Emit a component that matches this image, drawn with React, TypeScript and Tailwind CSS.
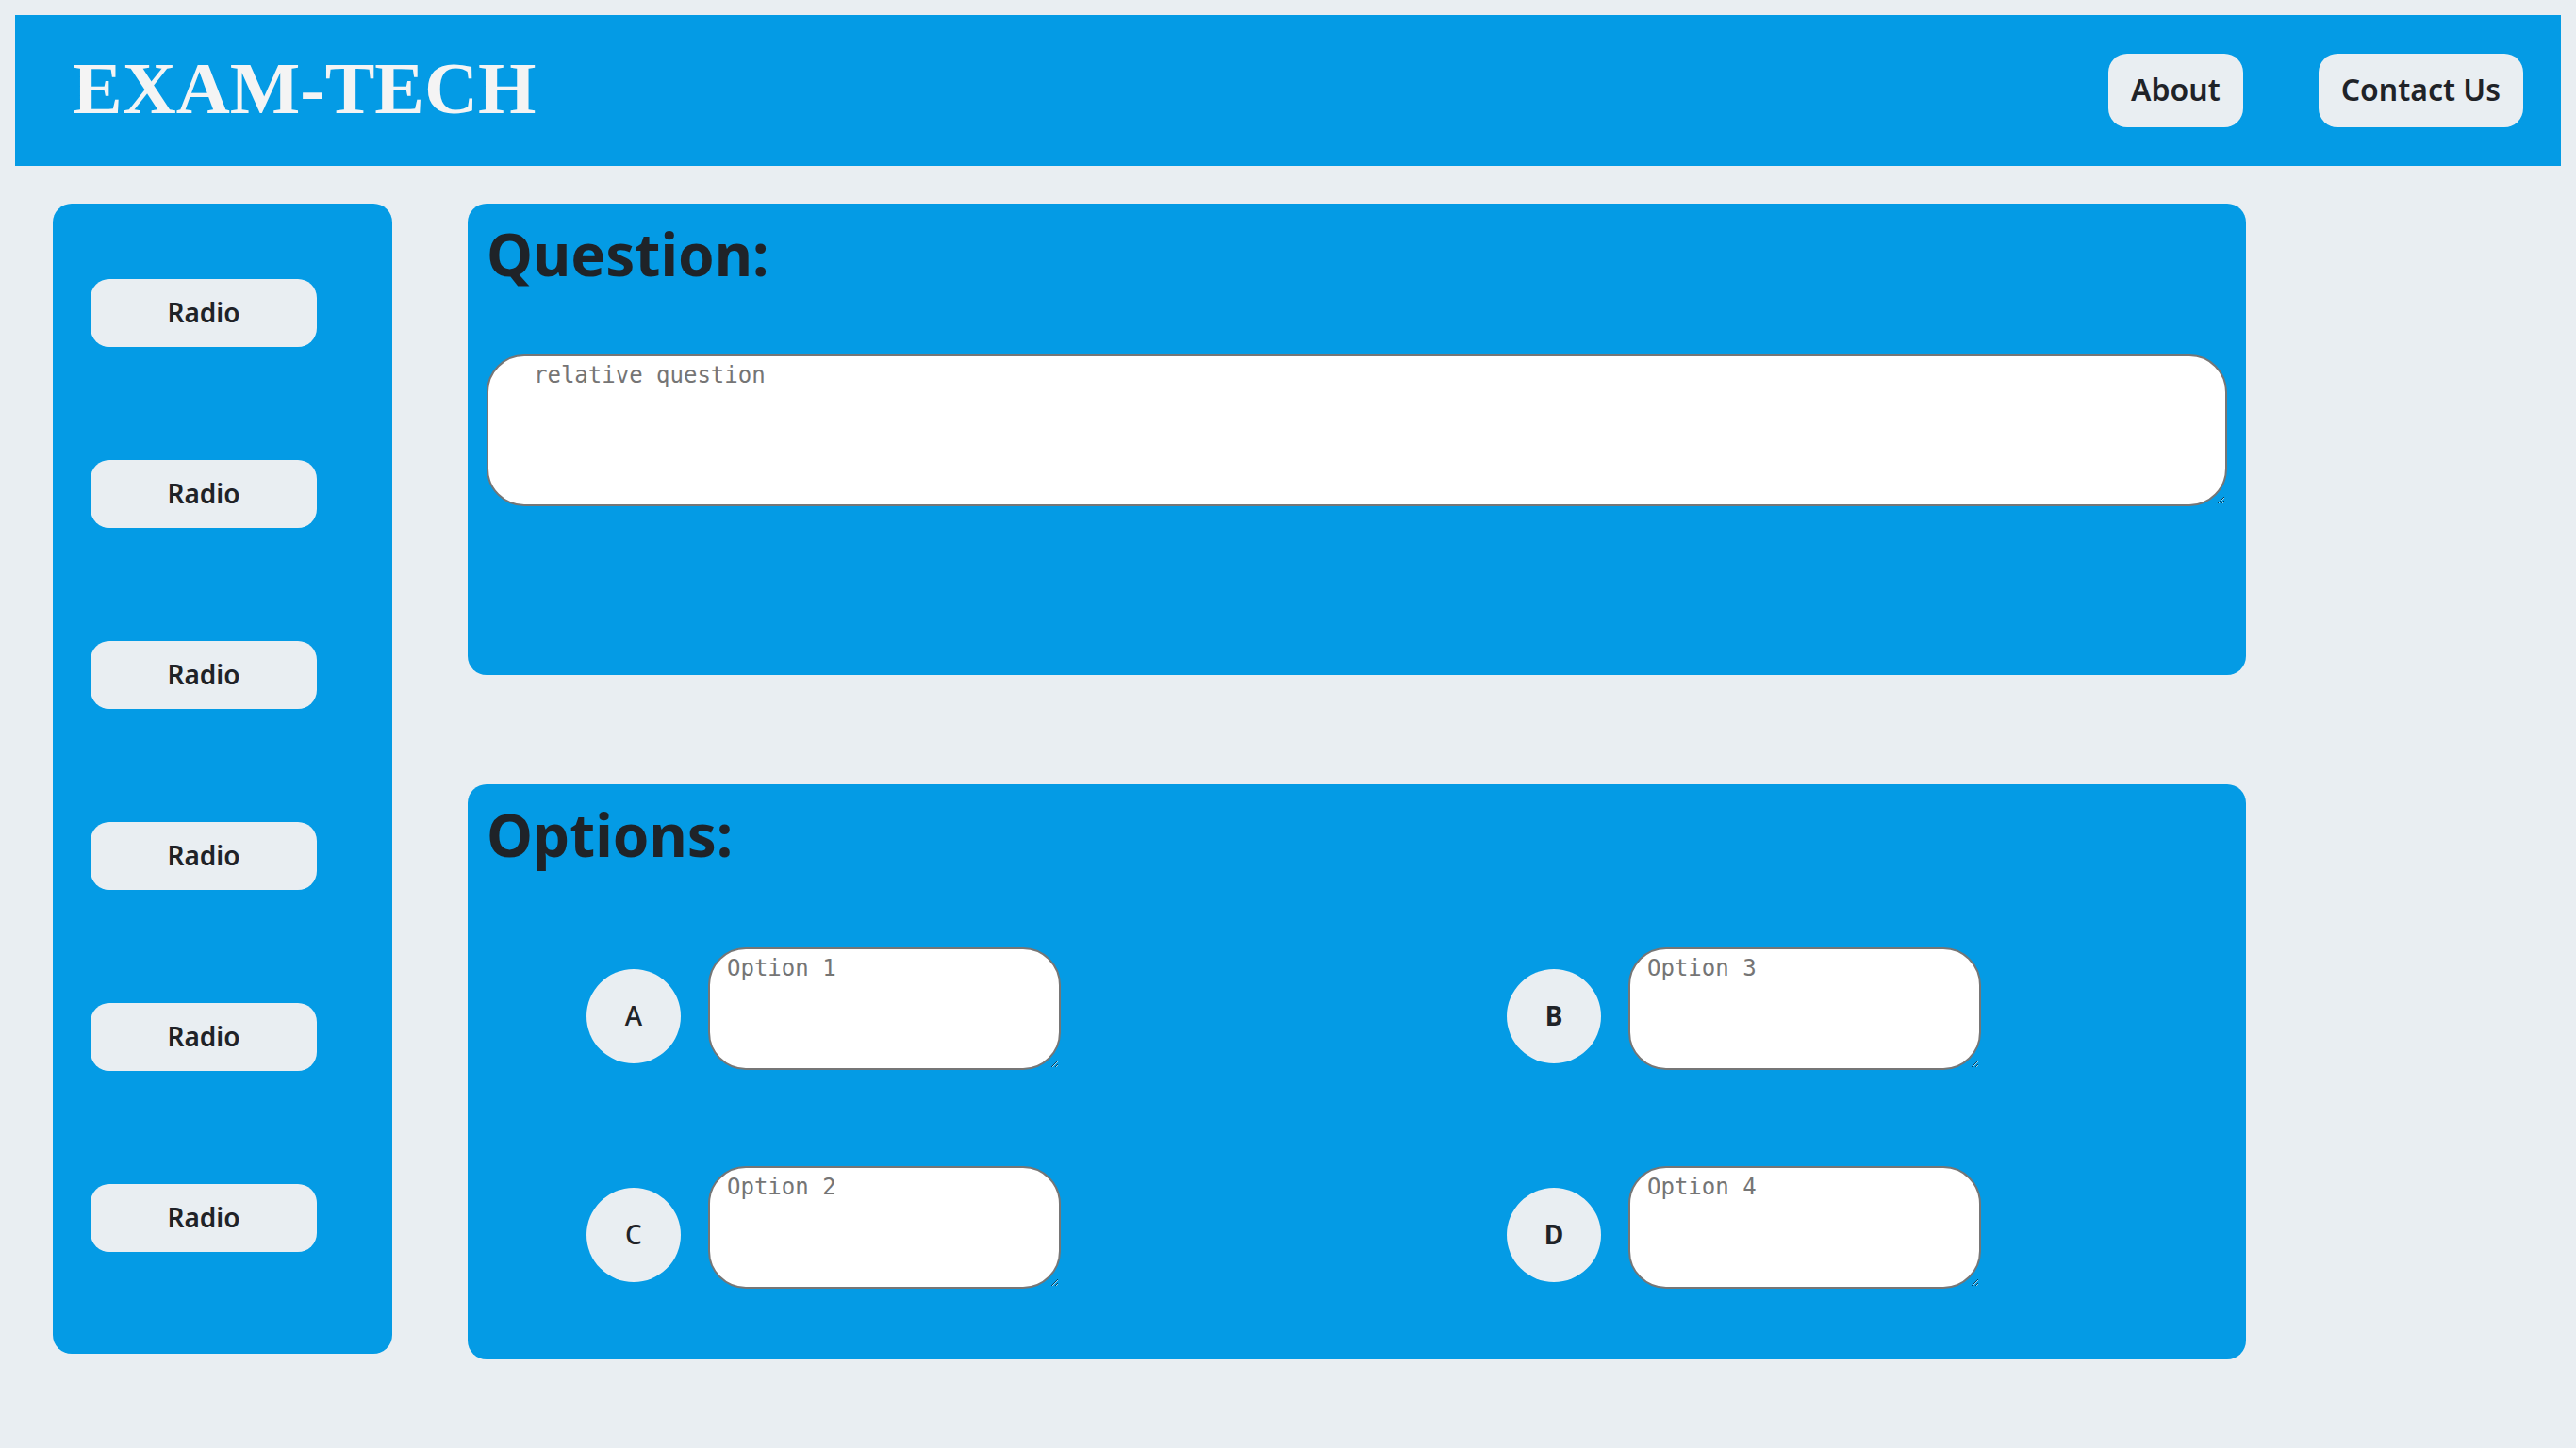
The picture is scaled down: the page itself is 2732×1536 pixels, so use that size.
import React from 'react';

const radios = ['Radio', 'Radio', 'Radio', 'Radio', 'Radio', 'Radio'];

const options = [
  { letter: 'A', placeholder: 'Option 1', weight: 'font-medium' },
  { letter: 'B', placeholder: 'Option 3', weight: 'font-bold' },
  { letter: 'C', placeholder: 'Option 2', weight: 'font-medium' },
  { letter: 'D', placeholder: 'Option 4', weight: 'font-bold' },
];

function OptionField({ letter, placeholder, weight }: { letter: string; placeholder: string; weight: string }) {
  return (
    <div className="flex items-start gap-[29px]">
      <div className={`mt-[23px] flex h-[100px] w-[100px] shrink-0 items-center justify-center rounded-full bg-[#e9eef2] pb-[3px] text-[28px] text-[#1f2328] ${weight}`}>
        {letter}
      </div>
      <textarea
        className="block h-[130px] w-[374px] rounded-[40px] border-2 border-[#767676] bg-white pl-[18px] pt-[6px] font-['DejaVu_Sans_Mono',monospace] text-[24px] leading-[28px] text-[#1f2328] outline-none placeholder:text-[#757575]"
        placeholder={placeholder}
      />
    </div>
  );
}

export default function App() {
  return (
    <div className="min-h-screen bg-[#e9eef2] p-4 font-['Noto_Sans',sans-serif] text-[#1f2328]">
      <header className="flex h-[160px] items-center bg-[#049be5] pl-[61px] pr-[40px]">
        <h1 className="pb-[4px] font-['Liberation_Serif',serif] text-[79px] font-bold leading-[92px] text-[#f4f4f4]">EXAM-TECH</h1>
        <nav className="ml-auto flex items-center gap-[80px]">
          <button className="h-[78px] rounded-[20px] bg-[#e9eef2] px-[24px] pb-[2px] text-[32px] font-semibold">About</button>
          <button className="h-[78px] rounded-[20px] bg-[#e9eef2] px-[24px] pb-[2px] text-[32px] font-semibold">Contact Us</button>
        </nav>
      </header>

      <section className="mt-10 flex items-start gap-[80px] px-10">
        <aside className="flex h-[1220px] w-[360px] shrink-0 flex-col gap-[120px] rounded-[20px] bg-[#049be5] pl-10 pt-20">
          {radios.map((label, i) => (
            <button key={i} className="h-[72px] w-[240px] rounded-[20px] bg-[#e9eef2] pb-[3px] text-[28px] font-semibold">
              {label}
            </button>
          ))}
        </aside>

        <div className="flex w-[1886px] flex-col gap-[116px]">
          <div className="h-[500px] rounded-[20px] bg-[#049be5] px-5 pt-[11px]">
            <h2 className="text-[62px] font-bold leading-[84px]">Question:</h2>
            <textarea
              className="mt-[65px] block h-[161px] w-full rounded-[40px] border-2 border-[#767676] bg-white pl-[48px] pt-[6px] font-['DejaVu_Sans_Mono',monospace] text-[24px] leading-[28px] outline-none placeholder:text-[#757575]"
              placeholder="relative question"
            />
          </div>

          <div className="rounded-[20px] bg-[#049be5] px-5 pb-[75px] pt-[11px]">
            <h2 className="text-[62px] font-bold leading-[84px]">Options:</h2>
            <div className="mt-[78px] grid grid-cols-[976px_auto] gap-y-[102px] pl-[106px]">
              {options.map((o) => (
                <OptionField key={o.letter} {...o} />
              ))}
            </div>
          </div>
        </div>
      </section>
    </div>
  );
}
